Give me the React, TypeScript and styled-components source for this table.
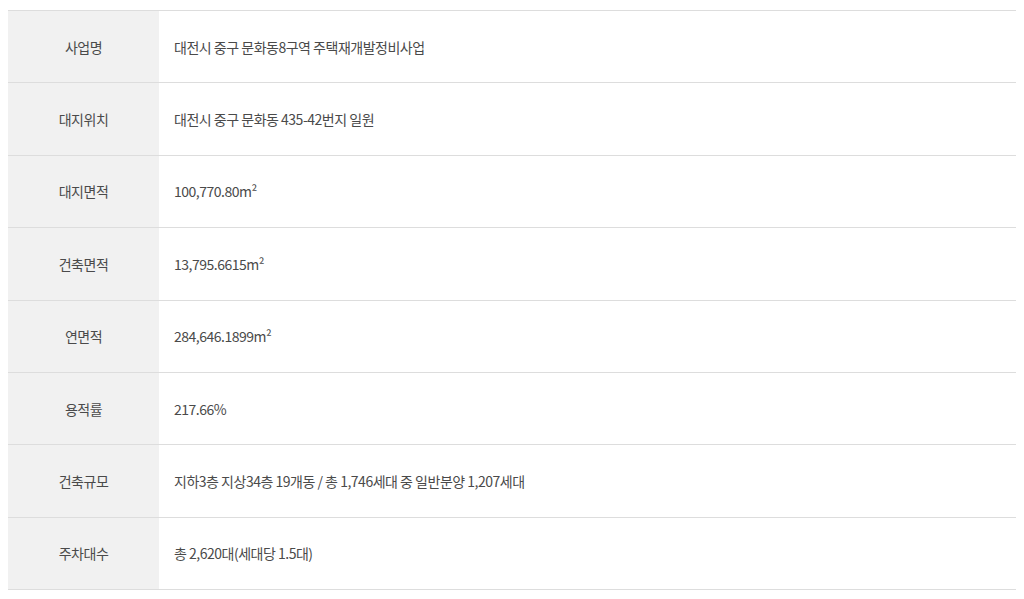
import React from 'react'
import styled, { createGlobalStyle } from 'styled-components'

const GlobalStyle = createGlobalStyle`
    html, body {
        margin: 0;
        padding: 0;
        background: #ffffff;
    }
    body {
        font-family: "Noto Sans CJK KR", "Noto Sans", sans-serif;
    }
`;

const Container = styled.div`
    padding: 10px 8px 0 8px;
`;

const Table = styled.div`
    width: 100%;
    border-top: 1px solid #dddddd;
`;

const Row = styled.div`
    display: grid;
    grid-template-columns: 151px 1fr;
    height: 72.375px;
    box-sizing: border-box;
    border-bottom: 1px solid #dddddd;
`;

const Label = styled.div`
    background-color: #f1f1f1;
    color: #4a4a4a;
    font-size: 14px;
    letter-spacing: -0.035em;

    display: flex;
    justify-content: center;
    align-items: center;
`;

const Value = styled.div`
    padding-left: 15px;
    color: #4a4a4a;
    font-size: 14px;
    letter-spacing: -0.035em;

    display: flex;
    justify-content: flex-start;
    align-items: center;
`;

interface RowType {
    label: string
    value: string
}

const rows: RowType[] = [
    { label: '사업명', value: '대전시 중구 문화동8구역 주택재개발정비사업' },
    { label: '대지위치', value: '대전시 중구 문화동 435-42번지 일원' },
    { label: '대지면적', value: '100,770.80m²' },
    { label: '건축면적', value: '13,795.6615m²' },
    { label: '연면적', value: '284,646.1899m²' },
    { label: '용적률', value: '217.66%' },
    { label: '건축규모', value: '지하3층 지상34층 19개동 / 총 1,746세대 중 일반분양 1,207세대' },
    { label: '주차대수', value: '총 2,620대(세대당 1.5대)' },
]

const App = () => {
    return (
        <>
            <GlobalStyle />
            <Container>
                <Table>
                    {rows.map((row) => (
                        <Row key={row.label}>
                            <Label>{row.label}</Label>
                            <Value>{row.value}</Value>
                        </Row>
                    ))}
                </Table>
            </Container>
        </>
    )
}

export default App;
